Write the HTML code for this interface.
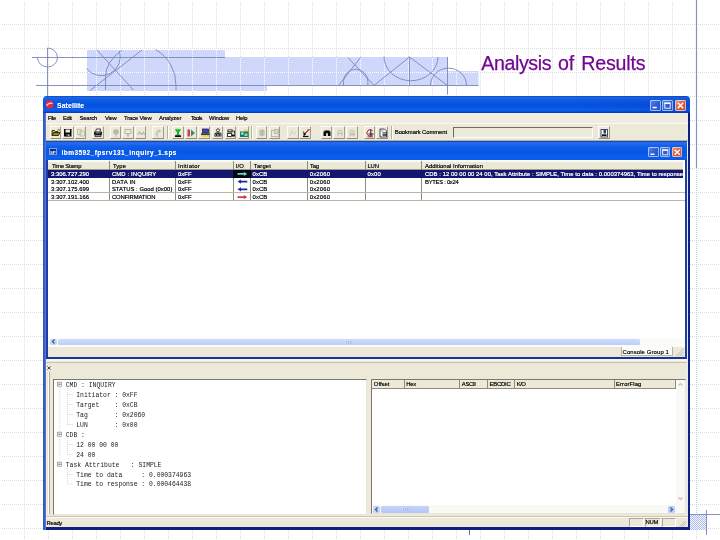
<!DOCTYPE html>
<html lang="en">
<head>
<meta charset="utf-8">
<title>Analysis of Results</title>
<style>
html,body{margin:0;padding:0;}
body{width:720px;height:540px;position:relative;overflow:hidden;background:#fff;font-family:"Liberation Sans",sans-serif;}
.abs,.abs *{position:absolute;box-sizing:border-box;}
#bg{position:absolute;left:0;top:0;}
#title{will-change:transform;position:absolute;left:0;top:50.700px;width:720px;height:24px;-webkit-text-stroke:.25px #720892;font-size:19.6px;line-height:24px;color:#720892;white-space:nowrap;}
#title span{position:absolute;top:0;}
/* window */
#win{will-change:transform;left:43px;top:96px;width:647px;height:434px;background:#ece9d8;border-radius:4px 4px 0 0;overflow:hidden;}
.t{white-space:nowrap;font-size:5.9px;line-height:8px;color:#000;-webkit-text-stroke:.08px #000;text-shadow:0 0 .35px rgba(0,0,0,.45);}
.w{color:#fff;font-weight:bold;}
.mono{font-family:"Liberation Mono",monospace;font-size:6.39px;line-height:8px;white-space:pre;color:#222;}
.btn{top:29.700px;width:11.500px;height:13.100px;border:.8px solid;border-color:#fdfcf8 #a09d8c #918e7e #fdfcf8;background:#ece9d8;}
.abs i{display:block;}
.sel{color:#fff;-webkit-text-stroke:.12px #fff;text-shadow:0 0 .35px rgba(255,255,255,.55);}
.w{-webkit-text-stroke:0 #fff;text-shadow:0 0 .35px rgba(255,255,255,.5);}
.cb{top:3.700px;width:11.200px;height:11.200px;border-radius:2px;background:linear-gradient(135deg,#5a8af2,#2c5cd4 55%,#2a55c8);box-shadow:inset 0 0 0 .7px rgba(235,242,255,.85);}
.cb svg{left:0;top:0;}
.cb.cx{background:linear-gradient(135deg,#ee9a7c,#db5a38 55%,#c9482a);}
.cb.c2{top:50.600px;width:10.500px;height:10.500px;}
.vd{top:65px;width:1px;height:40px;background:#8e8c80;}
.vd2{top:284px;width:1px;height:9px;background:#8e8c80;}
.sp{top:422px;height:9px;border:1px solid;border-color:#aca899 #fff #fff #aca899;}
</style>
</head>
<body>
<svg id="bg" width="720" height="540" viewBox="0 0 720 540">
<defs>
<pattern id="grid" width="24" height="24" patternUnits="userSpaceOnUse">
<line x1="0" y1="0.5" x2="24" y2="0.5" stroke="#dcdcdc" stroke-width="1" stroke-dasharray="1 1"/>
<line x1="0.5" y1="0" x2="0.5" y2="24" stroke="#dcdcdc" stroke-width="1" stroke-dasharray="1 1"/>
</pattern>
<pattern id="gridw" width="24" height="24" patternUnits="userSpaceOnUse">
<line x1="0" y1="0.5" x2="24" y2="0.5" stroke="#fff" stroke-width="1" stroke-dasharray="1 1"/>
<line x1="0.5" y1="0" x2="0.5" y2="24" stroke="#fff" stroke-width="1" stroke-dasharray="1 1"/>
</pattern>
<pattern id="chk" width="2" height="2" patternUnits="userSpaceOnUse"><rect width="2" height="2" fill="#f6f8fe"/><rect width="1" height="1" fill="#adbbee"/><rect x="1" y="1" width="1" height="1" fill="#adbbee"/></pattern>
<clipPath id="band"><path d="M87 50H225V57H448V71H478.500V85.500H267V91H87Z"/></clipPath>
</defs>
<rect x="1" y="1" width="719" height="539" fill="url(#grid)"/>
<path d="M87 50H225V57H448V71H478.500V85.500H267V91H87Z" fill="#cfd8fa"/>
<rect x="87" y="50" width="392" height="41" fill="url(#gridw)" clip-path="url(#band)"/>
<g fill="none" stroke="#7888bd" stroke-width=".9">
<!-- cross-hair -->
<path d="M47.500 48V96"/>
<path d="M32 57.500H225"/>
<path d="M36 85.500H478.500"/>
<path d="M47.500 48A10 9.500 0 1 1 37.500 57.500"/>
<!-- left figure -->
<path d="M96.500 49.500L133.500 90"/>
<path d="M142 50L90 90.500"/>
<path d="M86.500 68.500A19 19 0 0 0 119.500 51"/>
<path d="M122 50Q105.500 62 105.500 77V90"/>
<path d="M155.500 49.500A40.500 40.500 0 0 1 176 86V90"/>
<!-- right figure -->
<path d="M360.500 57.500L338.500 85.500"/>
<path d="M348 57.500L374 85.500"/>
<path d="M343.500 85.500V81.500A12.200 12.200 0 0 1 367.900 81.500V85.500"/>
<path d="M374 85.500L409.500 57L447.500 85.500"/>
<path d="M409.500 57V85.500"/>
<path d="M384 56.500A27 24 0 0 0 438 57"/>
<path d="M447.500 57V94.500"/>
<path d="M430.500 85.500A17.900 17.300 0 0 1 466.500 85.500"/>
<!-- right rule -->
<path d="M696.500 0V168" stroke="#8494ba" stroke-width="1.200"/>
<path d="M690 514.500H720"/>
<path d="M706.500 510V535"/>
<path d="M469.500 530V535" stroke="#5a608a"/>
</g>
<path d="M696.500 168V514" stroke="#a9d0ee" stroke-width="1" stroke-dasharray="1 1" fill="none"/>
<rect x="690" y="515" width="16" height="15" fill="url(#chk)"/>
</svg>
<div id="title"><span style="left:481.200px;letter-spacing:-.38px;">Analysis</span> <span style="left:557.900px;letter-spacing:-.1px;">of</span> <span style="left:581.300px;letter-spacing:-.2px;">Results</span></div>

<div id="win" class="abs">
<!-- main title bar -->
<div style="left:0;top:0;width:647px;height:16.5px;background:linear-gradient(#0a44c4 0,#1e66e2 8%,#1060e6 20%,#0855e2 40%,#0650dc 58%,#0860f0 78%,#0a58e6 88%,#0a40b8 95%,#0a3aa8 100%);"></div>
<div style="left:2.5px;top:18px;width:642px;height:9px;background:#efecdf;"></div><div style="left:2.5px;top:16.5px;width:642px;height:1.800px;background:#e8f0fb;"></div>
<svg style="left:2.200px;top:4.300px;" width="9" height="9" viewBox="0 0 9 9"><circle cx="4.500" cy="4.500" r="4" fill="#e8283c"/><path d="M1.500 5.500Q4.500 2 7.500 3.500" stroke="#ffd9dc" stroke-width="1.200" fill="none"/></svg>
<!-- caption buttons -->
<div style="left:520px;top:0;width:127px;height:16.500px;background:linear-gradient(90deg,rgba(4,30,140,0),rgba(4,30,140,.14));"></div>
<div class="cb" style="left:606.600px;"><svg width="11" height="11" viewBox="0 0 11 11"><rect x="2.600" y="6.800" width="4.200" height="1.500" fill="#fff"/></svg></div>
<div class="cb" style="left:619.200px;"><svg width="11" height="11" viewBox="0 0 11 11"><rect x="2.800" y="3.200" width="5.400" height="5" fill="none" stroke="#fff" stroke-width=".9"/><rect x="2.400" y="2.500" width="6.200" height="1.400" fill="#fff"/></svg></div>
<div class="cb cx" style="left:632.300px;"><svg width="11" height="11" viewBox="0 0 11 11"><path d="M2.800 2.800L8.200 8.200M8.200 2.800L2.800 8.200" stroke="#fff" stroke-width="1.500"/></svg></div>
<!-- borders -->
<div style="left:0;top:16.5px;width:3px;height:418px;background:linear-gradient(90deg,#3456c0 0,#3b5fc8 60%,#6686e4 100%);z-index:2;"></div>
<div style="left:643.500px;top:16.5px;width:1.500px;height:415px;background:#e3ecf8;"></div><div style="left:645px;top:16.5px;width:2px;height:418px;background:#0e2084;"></div>
<div style="left:0;top:431px;width:647px;height:3px;background:#0e2084;"></div>
<!-- menu + toolbar -->
<div style="left:2.5px;top:27px;width:642px;height:1px;background:#fbfaf4;"></div>
<div style="left:2.5px;top:44.300px;width:642px;height:.9px;background:#b5b2a0;"></div>
<div class="btn" style="left:6.5px;"><svg width="10" height="10" viewBox="0 0 10 10" style="left:.3px;top:.9px;"><path d="M1 7.500V2.500H3.500L4.500 3.500H7V4.500" fill="#b9b43a" stroke="#1a1a00" stroke-width=".8"/><path d="M1 7.500L2.500 4.500H9L7.500 7.500Z" fill="#8d8a1c" stroke="#1a1a00" stroke-width=".8"/><path d="M6.500 2Q8 1 9 2.500" stroke="#111" stroke-width=".7" fill="none"/></svg></div>
<div class="btn" style="left:19.0px;"><svg width="10" height="10" viewBox="0 0 10 10" style="left:.3px;top:.9px;"><rect x="1" y="1" width="7.500" height="7.500" fill="#0a0a0a"/><rect x="2.500" y="1.500" width="4.500" height="3" fill="#e9e9e9"/><rect x="3" y="6" width="3.500" height="2.500" fill="#444"/><rect x="5.300" y="6.400" width="1" height="1.800" fill="#eee"/></svg></div>
<div class="btn" style="left:31.5px;"><svg width="10" height="10" viewBox="0 0 10 10" style="left:.3px;top:.9px;"><path d="M1.500 1.500H5V6.500H1.500Z M4 3.500L6 3H8.500V8H4Z" fill="none" stroke="#b9b6a6" stroke-width=".8"/></svg></div>
<div class="btn" style="left:49.0px;"><svg width="10" height="10" viewBox="0 0 10 10" style="left:.3px;top:.9px;"><path d="M2.500 3.500L3.500 1H7.500L7 3.500" fill="#fff" stroke="#111" stroke-width=".8"/><rect x="1" y="3.500" width="8" height="3.500" rx="1" fill="#111"/><path d="M2 7H8V8.500H2Z" fill="#ddd" stroke="#111" stroke-width=".7"/><rect x="2.500" y="4.500" width="5" height=".8" fill="#ccc"/></svg></div>
<div class="btn" style="left:66.5px;"><svg width="10" height="10" viewBox="0 0 10 10" style="left:.3px;top:.9px;"><circle cx="5" cy="4" r="2.800" fill="#b9b6a6"/><path d="M5 6.500V9" stroke="#b9b6a6" stroke-width="1"/></svg></div>
<div class="btn" style="left:79.0px;"><svg width="10" height="10" viewBox="0 0 10 10" style="left:.3px;top:.9px;"><rect x="2" y="1.500" width="6" height="4" fill="none" stroke="#b9b6a6" stroke-width=".9"/><path d="M5 5.500V9M3.500 7H6.500" stroke="#b9b6a6" stroke-width=".9"/></svg></div>
<div class="btn" style="left:91.6px;"><svg width="10" height="10" viewBox="0 0 10 10" style="left:.3px;top:.9px;"><path d="M1.500 7L3.500 3L5 7M6 7L7.500 3.500L8.500 7M2 5.500H8" stroke="#b9b6a6" stroke-width=".9" fill="none"/></svg></div>
<div class="btn" style="left:109.0px;"><svg width="10" height="10" viewBox="0 0 10 10" style="left:.3px;top:.9px;"><path d="M4 9V3H8M6 1.500V5M2.500 6H5" stroke="#b9b6a6" stroke-width=".9" fill="none"/></svg></div>
<div class="btn" style="left:129.0px;"><svg width="10" height="10" viewBox="0 0 10 10" style="left:.3px;top:.9px;"><path d="M2.500 1H7.500V2.500L6 4.500V6L7.500 7.500H2.500L4 6V4.500L2.500 2.500Z" fill="#23b03a"/><rect x="2" y="7.300" width="6" height="1.700" fill="#0a0a0a"/><rect x="2.500" y=".8" width="5" height="1.200" fill="#39d24f"/></svg></div>
<div class="btn" style="left:142.0px;"><svg width="10" height="10" viewBox="0 0 10 10" style="left:.3px;top:.9px;"><rect x="1.500" y="1.500" width="2.500" height="7" fill="#d0404a"/><path d="M5 1.500L9 5L5 8.500Z" fill="#2f8f7e"/></svg></div>
<div class="btn" style="left:155.3px;"><svg width="10" height="10" viewBox="0 0 10 10" style="left:.3px;top:.9px;"><rect x="2.500" y="1" width="6" height="4" fill="#4a3fb0" stroke="#141450" stroke-width=".7"/><rect x="1" y="5.500" width="8.500" height="1.300" fill="#111"/><rect x="1.500" y="7" width="7.500" height="1.800" fill="#e8d23a"/></svg></div>
<div class="btn" style="left:168.6px;"><svg width="10" height="10" viewBox="0 0 10 10" style="left:.3px;top:.9px;"><circle cx="5" cy="2.300" r="1.500" fill="#fff" stroke="#111" stroke-width=".8"/><path d="M1.500 8.500V5.500L3 4.500H7L8.500 5.500V8.500Z" fill="#111"/><circle cx="3.500" cy="7" r="1.300" fill="#111" stroke="#eee" stroke-width=".5"/><circle cx="6.800" cy="7" r="1.300" fill="#111" stroke="#eee" stroke-width=".5"/></svg></div>
<div class="btn" style="left:181.7px;"><svg width="10" height="10" viewBox="0 0 10 10" style="left:.3px;top:.9px;"><rect x="1.500" y="1.500" width="5" height="3" fill="#111"/><rect x="2.300" y="2.200" width="3.300" height="1.200" fill="#eee"/><path d="M6.500 3H8.500V6" stroke="#111" stroke-width=".8" fill="none"/><rect x="1.500" y="5.500" width="4" height="3" fill="#fff" stroke="#111" stroke-width=".8"/><rect x="6" y="6.500" width="3" height="2" fill="#111"/></svg></div>
<div class="btn" style="left:194.7px;"><svg width="10" height="10" viewBox="0 0 10 10" style="left:.3px;top:.9px;"><rect x="5" y="1.500" width="4" height="3.500" fill="#ecd96a"/><rect x="1" y="3.500" width="8.500" height="5.500" fill="#147a64"/><rect x="2" y="4.500" width="2.500" height="2" fill="#bfe9de"/><rect x="5.500" y="5.500" width="3" height="2.500" fill="#8fd4c2"/></svg></div>
<div class="btn" style="left:212.6px;"><svg width="10" height="10" viewBox="0 0 10 10" style="left:.3px;top:.9px;"><path d="M5 1.500L8 3.500L5 5L2 3.500Z M2 5L5 6.500L8 5M2 6.500L5 8L8 6.500" fill="#b9b6a6" stroke="#b9b6a6" stroke-width=".7"/></svg></div>
<div class="btn" style="left:225.6px;"><svg width="10" height="10" viewBox="0 0 10 10" style="left:.3px;top:.9px;"><rect x="1.500" y="2.500" width="7" height="6" fill="none" stroke="#b9b6a6" stroke-width=".9"/><rect x="4.500" y="1.500" width="4" height="4" fill="#d8d5c6" stroke="#b9b6a6" stroke-width=".8"/></svg></div>
<div class="btn" style="left:244.0px;"><svg width="10" height="10" viewBox="0 0 10 10" style="left:.3px;top:.9px;"><path d="M2 8L4 2.500L6 6.500L8 4" stroke="#cfccbd" stroke-width=".8" fill="none"/></svg></div>
<div class="btn" style="left:256.3px;"><svg width="10" height="10" viewBox="0 0 10 10" style="left:.3px;top:.9px;"><path d="M2 8.500H7.500" stroke="#111" stroke-width="1.200"/><path d="M2.500 7.500L4 5L8.500 1.500" stroke="#b02030" stroke-width="1"/><path d="M2 3L5 6.500L3 8Z" fill="#111"/><path d="M6 2H8.500" stroke="#b02030" stroke-width=".8"/></svg></div>
<div class="btn" style="left:277.6px;"><svg width="10" height="10" viewBox="0 0 10 10" style="left:.3px;top:.9px;"><rect x="1.500" y="3.500" width="3" height="4.500" fill="#0a0a0a"/><rect x="5.500" y="3.500" width="3" height="4.500" fill="#0a0a0a"/><rect x="2.500" y="2.500" width="5" height="2.500" fill="#0a0a0a"/><rect x="4.300" y="5.500" width="1.400" height="2.500" fill="#f4f2e8"/></svg></div>
<div class="btn" style="left:290.4px;"><svg width="10" height="10" viewBox="0 0 10 10" style="left:.3px;top:.9px;"><path d="M3 8.500V4.500Q3 2 5 2Q7 2 7 4.500V8.500M3 5.500H7" stroke="#b9b6a6" stroke-width=".9" fill="none"/></svg></div>
<div class="btn" style="left:303.0px;"><svg width="10" height="10" viewBox="0 0 10 10" style="left:.3px;top:.9px;"><path d="M3 8.500V4.500Q3 2 5 2Q7 2 7 4.500V8.500M5 4V8M3.500 6.500H8" stroke="#b9b6a6" stroke-width=".9" fill="none"/></svg></div>
<div class="btn" style="left:320.7px;"><svg width="10" height="10" viewBox="0 0 10 10" style="left:.3px;top:.9px;"><path d="M7.500 2.500A3.300 3.300 0 1 0 7.800 7" stroke="#b81c2a" stroke-width="1" fill="none"/><path d="M5.800 2V8.500M3.500 6H8.500" stroke="#231050" stroke-width="1" fill="none"/><path d="M2.500 8.800H8" stroke="#b81c2a" stroke-width=".8"/></svg></div>
<div class="btn" style="left:333.3px;"><svg width="10" height="10" viewBox="0 0 10 10" style="left:.3px;top:.9px;"><path d="M2 1H6.500L8.500 3V9H2Z" fill="#fff" stroke="#222" stroke-width=".8"/><rect x="4.500" y="4.300" width="4" height="1.200" fill="#2a3a9a"/><rect x="4.500" y="6.300" width="4" height="1.400" fill="#111"/><rect x="3" y="2.500" width="2.500" height=".8" fill="#777"/></svg></div>
<div class="btn" style="left:555.0px;"><svg width="10" height="10" viewBox="0 0 10 10" style="left:.3px;top:.9px;"><rect x="2" y="1.500" width="6.500" height="7.500" fill="#fff" stroke="#222" stroke-width=".8"/><rect x="4.500" y="1.500" width="2.500" height="4" fill="#2a3a9a"/><rect x="3" y="6.300" width="4.500" height="1.700" fill="#111"/></svg></div>
<div style="left:124.0px;top:30px;width:1px;height:13px;background:#b5b2a0;"></div><div style="left:125.0px;top:30px;width:1px;height:13px;background:#fff;"></div>
<div style="left:208.0px;top:30px;width:1px;height:13px;background:#b5b2a0;"></div><div style="left:209.0px;top:30px;width:1px;height:13px;background:#fff;"></div>
<div style="left:347.8px;top:30px;width:1px;height:13px;background:#b5b2a0;"></div><div style="left:348.8px;top:30px;width:1px;height:13px;background:#fff;"></div>
<div style="left:409.5px;top:31px;width:140.5px;height:11px;border:1px solid;border-color:#6f6d62 #fff #fff #6f6d62;background:#ece9d8;"></div>
<!-- child window -->
<div style="left:2.5px;top:45.200px;width:641px;height:217.800px;background:#1f3ea4;"></div>
<div style="left:2.5px;top:261px;width:641px;height:2px;background:#1a3590;"></div>
<div style="left:2.5px;top:45.200px;width:641px;height:18.600px;background:linear-gradient(#0a3cb0 0,#2a6cf0 9%,#0c5ee8 30%,#0855e2 60%,#0a60f0 85%,#0a58e6 100%);"></div>
<div style="left:5.800px;top:52.400px;width:8.600px;height:7px;background:#0a2a8c;border:.5px solid #7f9ee6;overflow:hidden;"><span style="left:.3px;top:.6px;font-size:4.200px;line-height:5px;font-weight:bold;color:#fff;letter-spacing:-.1px;">SPS</span></div>
<div class="cb c2" style="left:605px;"><svg width="10.500" height="10.500" viewBox="0 0 11 11"><rect x="2.600" y="6.800" width="4.200" height="1.500" fill="#fff"/></svg></div>
<div class="cb c2" style="left:616.600px;"><svg width="10.500" height="10.500" viewBox="0 0 11 11"><rect x="2.800" y="3.200" width="5.400" height="5" fill="none" stroke="#fff" stroke-width=".9"/><rect x="2.400" y="2.500" width="6.200" height="1.400" fill="#fff"/></svg></div>
<div class="cb c2 cx" style="left:628.700px;"><svg width="10.500" height="10.500" viewBox="0 0 11 11"><path d="M2.800 2.800L8.200 8.200M8.200 2.800L2.800 8.200" stroke="#fff" stroke-width="1.500"/></svg></div>
<!-- list -->
<div style="left:5.2px;top:64px;width:636.500px;height:177.500px;background:#fff;"></div>
<div style="left:5.2px;top:65px;width:635px;height:9px;background:#ece9d8;border-bottom:1px solid #9d9a8a;border-top:1px solid #fbfaf4;"></div>
<i class="vd" style="left:66.3px;"></i><i class="vd" style="left:132px;"></i><i class="vd" style="left:189.5px;"></i><i class="vd" style="left:207px;"></i><i class="vd" style="left:264px;"></i><i class="vd" style="left:322px;"></i><i class="vd" style="left:378.300px;"></i>
<div style="left:5.2px;top:74px;width:635px;height:7.700px;background:#14176e;"></div>
<div style="left:190px;top:74px;width:17.500px;height:7.700px;background:#05050f;"></div>
<div style="left:5.2px;top:96.300px;width:636.500px;height:1px;background:#b9b7ad;"></div>
<div style="left:5.2px;top:104px;width:636.500px;height:1px;background:#b9b7ad;"></div>
<!-- arrows -->
<svg style="left:192px;top:74px;" width="14" height="31" viewBox="0 0 14 31">
<path d="M2.500 3H8.800V1.800L12.300 3.900L8.800 6V4.800H2.500Z" fill="#5ad9c0"/>
<path d="M12.300 10.700H6V9.500L2.500 11.600L6 13.700V12.500H12.300Z" fill="#1a2aa8"/>
<path d="M12.300 18.400H6V17.200L2.500 19.300L6 21.400V20.200H12.300Z" fill="#1a2aa8"/>
<path d="M2.500 26.200H8.800V25L12.300 27.100L8.800 29.200V28H2.500Z" fill="#e03545"/>
</svg>
<!-- h scrollbar -->
<div style="left:5.2px;top:241.500px;width:636.500px;height:9.500px;background:#fbfbf8;"></div>
<div style="left:6.600px;top:242.600px;width:7.800px;height:6.200px;background:#c4d4fb;border-radius:1.500px;"></div>
<svg style="left:8.200px;top:243.200px;" width="5" height="5" viewBox="0 0 5 5"><path d="M3.500 .5L1.500 2.500L3.500 4.500" stroke="#35508f" stroke-width="1.100" fill="none"/></svg>
<div style="left:14.800px;top:242.800px;width:582.200px;height:5.800px;background:linear-gradient(#cedbfd,#bdcffa);border-radius:1.500px;"></div>
<svg style="left:302px;top:243.800px;" width="7" height="4" viewBox="0 0 7 4"><path d="M1 .5V3.500M3 .5V3.500M5 .5V3.500" stroke="#eef3ff" stroke-width=".7"/><path d="M1.700 .8V3.800M3.700 .8V3.800M5.700 .8V3.800" stroke="#8ea4e0" stroke-width=".7"/></svg>
<!-- tab row -->
<div style="left:5.2px;top:251px;width:636.500px;height:10px;background:#ece9d8;"></div>
<div style="left:577.5px;top:251px;width:52px;height:9.300px;background:#fdfdfb;border:1px solid #b7b4a3;border-top:none;"></div>
<svg style="left:632px;top:252px;" width="9" height="9" viewBox="0 0 9 9"><path d="M8.500 1L1 8.500M8.500 4L4 8.500M8.500 7L7 8.500" stroke="#b5b2a0" stroke-width="1"/></svg>
<!-- dock -->
<div style="left:2.5px;top:262.800px;width:641px;height:2.700px;background:#f1f4fa;"></div>
<div style="left:2.5px;top:265.500px;width:641px;height:1px;background:#cbc3ad;"></div>
<svg style="left:3.700px;top:269.800px;" width="4" height="4" viewBox="0 0 4 4"><path d="M.4 .4L3.600 3.600M3.600 .4L.4 3.600" stroke="#111" stroke-width=".75"/></svg>
<div style="left:4.800px;top:276px;width:.8px;height:142px;background:#fff;"></div><div style="left:5.600px;top:276px;width:1px;height:142px;background:#aeab9a;"></div>
<div style="left:9.900px;top:282.800px;width:314.600px;height:136.200px;background:#fff;border:1px solid;border-color:#7b796d #e8e6da #e8e6da #7b796d;"></div>
<div style="left:328px;top:283px;width:314.500px;height:135px;background:#fff;border:1px solid;border-color:#7b796d #e8e6da #e8e6da #7b796d;"></div>
<div style="left:329px;top:284px;width:303.500px;height:9px;background:#ece9d8;border-bottom:1px solid #8e8c80;"></div>
<i class="vd2" style="left:361.300px;"></i><i class="vd2" style="left:416.300px;"></i><i class="vd2" style="left:443.800px;"></i><i class="vd2" style="left:471.300px;"></i><i class="vd2" style="left:570.700px;"></i><i class="vd2" style="left:632px;"></i>
<div style="left:632.500px;top:284px;width:9px;height:125px;background:#faf9f5;"></div>
<div style="left:329px;top:409px;width:312.500px;height:8px;background:#faf9f5;"></div>
<div style="left:624.500px;top:409.500px;width:7.500px;height:7.500px;background:#bccffa;border-radius:1.500px;"></div>
<svg style="left:626px;top:411px;" width="5" height="5" viewBox="0 0 5 5"><path d="M1.500 .5L3.500 2.500L1.500 4.500" stroke="#3d57a8" stroke-width="1.200" fill="none"/></svg>
<svg style="left:634.500px;top:286px;" width="5" height="5" viewBox="0 0 5 5"><path d="M.5 3.500L2.500 1.500L4.500 3.500" stroke="#c5c3b8" stroke-width="1.200" fill="none"/></svg>
<svg style="left:634.500px;top:400px;" width="5" height="5" viewBox="0 0 5 5"><path d="M.5 1.500L2.500 3.500L4.500 1.500" stroke="#c5c3b8" stroke-width="1.200" fill="none"/></svg>
<div style="left:330px;top:409.700px;width:7.300px;height:7px;background:#c4d4fb;border-radius:1.500px;"></div>
<svg style="left:331.200px;top:410.700px;" width="5" height="5" viewBox="0 0 5 5"><path d="M3.500 .5L1.500 2.500L3.500 4.500" stroke="#35508f" stroke-width="1.100" fill="none"/></svg>
<div style="left:338px;top:410px;width:47.500px;height:6.500px;background:linear-gradient(#c3d3fb,#b3c6f5);border-radius:1.500px;"></div>
<svg style="left:358.500px;top:411.300px;" width="7" height="4" viewBox="0 0 7 4"><path d="M1 .5V3.500M3 .5V3.500M5 .5V3.500" stroke="#eef3ff" stroke-width=".7"/><path d="M1.700 .8V3.800M3.700 .8V3.800M5.700 .8V3.800" stroke="#8ea4e0" stroke-width=".7"/></svg>
<!-- tree glyphs -->
<svg style="left:13.300px;top:283.700px;" width="24" height="110" viewBox="0 0 24 110">
<g fill="#fff" stroke="#8a8a8a" stroke-width=".7"><rect x="1.500" y="2.200" width="4" height="4"/><rect x="1.500" y="52.200" width="4" height="4"/><rect x="1.500" y="82.200" width="4" height="4"/></g>
<g stroke="#333" stroke-width=".8"><path d="M2.300 4.200H4.700M2.300 54.200H4.700M2.300 84.200H4.700"/></g>
<g stroke="#c4c4c4" stroke-width=".7" stroke-dasharray="1 1" fill="none"><path d="M3.750 7V52M3.750 57V82M11.500 14.500H17M11.500 24.500H17M11.500 34.500H17M11.500 44.500H17M11.500 64.500H17M11.500 74.500H17M11.500 94.500H17M11.500 104H17M11.500 8V44.500M11.500 58V74.500M11.500 88V104"/></g>
</svg>
<!-- status bar -->
<div style="left:2.5px;top:419.500px;width:642px;height:1px;background:#c9c6b6;"></div>
<div style="left:2.5px;top:420.500px;width:642px;height:1px;background:#fbfaf4;"></div>
<div class="sp" style="left:586px;width:14.500px;"></div><div class="sp" style="left:601.500px;width:16px;"></div><div class="sp" style="left:618.500px;width:14.500px;"></div>
<svg style="left:635px;top:423px;" width="8" height="8" viewBox="0 0 8 8"><path d="M7.500 2L2 7.500M7.500 4.500L4.500 7.500" stroke="#b5b2a0" stroke-width="1"/></svg>
<div id="t0" class="t w" style="left:14.00px;top:6.00px;font-size:6.9px;letter-spacing:0.096px;">Satellite</div>
<div id="t1" class="t" style="left:5.00px;top:17.70px;letter-spacing:-0.425px;">File</div>
<div id="t2" class="t" style="left:20.00px;top:17.70px;letter-spacing:-0.389px;">Edit</div>
<div id="t3" class="t" style="left:36.50px;top:17.70px;letter-spacing:-0.195px;">Search</div>
<div id="t4" class="t" style="left:62.00px;top:17.70px;letter-spacing:-0.293px;">View</div>
<div id="t5" class="t" style="left:81.00px;top:17.70px;letter-spacing:-0.164px;">Trace View</div>
<div id="t6" class="t" style="left:116.00px;top:17.70px;letter-spacing:-0.078px;">Analyzer</div>
<div id="t7" class="t" style="left:148.00px;top:17.70px;letter-spacing:-0.593px;">Tools</div>
<div id="t8" class="t" style="left:166.00px;top:17.70px;letter-spacing:-0.159px;">Window</div>
<div id="t9" class="t" style="left:193.00px;top:17.70px;letter-spacing:-0.156px;">Help</div>
<div id="t10" class="t" style="left:351.80px;top:32.00px;letter-spacing:-0.093px;">Bookmark Comment</div>
<div id="t11" class="t w" style="left:18.50px;top:53.10px;font-size:6.5px;letter-spacing:0.450px;">ibm3592_fpsrv131_inquiry_1.sps</div>
<div id="t12" class="t" style="left:9.00px;top:65.70px;letter-spacing:-0.235px;">Time Stamp</div>
<div id="t13" class="t" style="left:70.00px;top:65.70px;letter-spacing:0.055px;">Type</div>
<div id="t14" class="t" style="left:135.00px;top:65.70px;letter-spacing:0.297px;">Initiator</div>
<div id="t15" class="t" style="left:192.80px;top:65.70px;letter-spacing:0.047px;">I/O</div>
<div id="t16" class="t" style="left:210.80px;top:65.70px;letter-spacing:0.137px;">Target</div>
<div id="t17" class="t" style="left:267.00px;top:65.70px;letter-spacing:-0.233px;">Tag</div>
<div id="t18" class="t" style="left:324.50px;top:65.70px;letter-spacing:-0.166px;">LUN</div>
<div id="t19" class="t" style="left:382.00px;top:65.70px;letter-spacing:0.046px;">Additional Information</div>
<div id="t20" class="t sel" style="left:7.90px;top:73.90px;letter-spacing:0.048px;">3:306.727.290</div>
<div id="t21" class="t sel" style="left:68.90px;top:73.90px;letter-spacing:0.133px;">CMD : INQUIRY</div>
<div id="t22" class="t sel" style="left:135.00px;top:73.90px;letter-spacing:0.020px;">0xFF</div>
<div id="t23" class="t sel" style="left:209.60px;top:73.90px;letter-spacing:0.048px;">0xCB</div>
<div id="t24" class="t sel" style="left:266.70px;top:73.90px;letter-spacing:0.195px;">0x2060</div>
<div id="t25" class="t sel" style="left:324.50px;top:73.90px;letter-spacing:0.180px;">0x00</div>
<div id="t26" class="t" style="left:7.90px;top:81.62px;letter-spacing:0.048px;">3:307.102.400</div>
<div id="t27" class="t" style="left:68.90px;top:81.62px;letter-spacing:0.279px;">DATA IN</div>
<div id="t28" class="t" style="left:135.00px;top:81.62px;letter-spacing:0.020px;">0xFF</div>
<div id="t29" class="t" style="left:209.60px;top:81.62px;letter-spacing:0.048px;">0xCB</div>
<div id="t30" class="t" style="left:266.70px;top:81.62px;letter-spacing:0.195px;">0x2060</div>
<div id="t31" class="t" style="left:7.90px;top:89.34px;letter-spacing:0.048px;">3:307.175.699</div>
<div id="t32" class="t" style="left:68.90px;top:89.34px;letter-spacing:0.024px;">STATUS : Good (0x00)</div>
<div id="t33" class="t" style="left:135.00px;top:89.34px;letter-spacing:0.020px;">0xFF</div>
<div id="t34" class="t" style="left:209.60px;top:89.34px;letter-spacing:0.048px;">0xCB</div>
<div id="t35" class="t" style="left:266.70px;top:89.34px;letter-spacing:0.195px;">0x2060</div>
<div id="t36" class="t" style="left:7.90px;top:97.06px;letter-spacing:0.048px;">3:307.191.166</div>
<div id="t37" class="t" style="left:68.90px;top:97.06px;letter-spacing:-0.130px;">CONFIRMATION</div>
<div id="t38" class="t" style="left:135.00px;top:97.06px;letter-spacing:0.020px;">0xFF</div>
<div id="t39" class="t" style="left:209.60px;top:97.06px;letter-spacing:0.048px;">0xCB</div>
<div id="t40" class="t" style="left:266.70px;top:97.06px;letter-spacing:0.195px;">0x2060</div>
<div id="t41" class="t sel" style="left:382.00px;top:73.90px;letter-spacing:0.050px;">CDB : 12 00 00 00 24 00, Task Attribute : SIMPLE, Time to data : 0.000374963, Time to response</div>
<div id="t42" class="t" style="left:382.00px;top:81.62px;letter-spacing:-0.292px;">BYTES : 0x24</div>
<div id="t43" class="t" style="left:579.50px;top:251.80px;letter-spacing:0.130px;">Console Group 1</div>
<div id="t44" class="t" style="left:330.80px;top:284.30px;letter-spacing:0.015px;">Offset</div>
<div id="t45" class="t" style="left:363.30px;top:284.30px;letter-spacing:-0.261px;">Hex</div>
<div id="t46" class="t" style="left:418.80px;top:284.30px;letter-spacing:-0.338px;">ASCII</div>
<div id="t47" class="t" style="left:446.50px;top:284.30px;letter-spacing:-0.211px;">EBCDIC</div>
<div id="t48" class="t" style="left:473.70px;top:284.30px;letter-spacing:-0.452px;">K/O</div>
<div id="t49" class="t" style="left:573.00px;top:284.30px;letter-spacing:0.104px;">ErrorFlag</div>
<div id="t50" class="t" style="left:3.50px;top:423.00px;letter-spacing:-0.306px;">Ready</div>
<div id="t51" class="t" style="left:602.50px;top:422.30px;letter-spacing:-0.307px;">NUM</div>
<div class="mono" style="left:22.80px;top:285.70px;">CMD : INQUIRY</div>
<div class="mono" style="left:33.30px;top:295.70px;">Initiator : 0xFF</div>
<div class="mono" style="left:33.30px;top:305.70px;">Target    : 0xCB</div>
<div class="mono" style="left:33.30px;top:315.70px;">Tag       : 0x2060</div>
<div class="mono" style="left:33.30px;top:325.70px;">LUN       : 0x00</div>
<div class="mono" style="left:22.80px;top:335.70px;">CDB :</div>
<div class="mono" style="left:33.30px;top:345.70px;">12 00 00 00</div>
<div class="mono" style="left:33.30px;top:355.70px;">24 00</div>
<div class="mono" style="left:22.80px;top:365.70px;">Task Attribute   : SIMPLE</div>
<div class="mono" style="left:33.30px;top:375.70px;">Time to data     : 0.000374963</div>
<div class="mono" style="left:33.30px;top:385.20px;">Time to response : 0.000464438</div>
</div>
</body>
</html>
